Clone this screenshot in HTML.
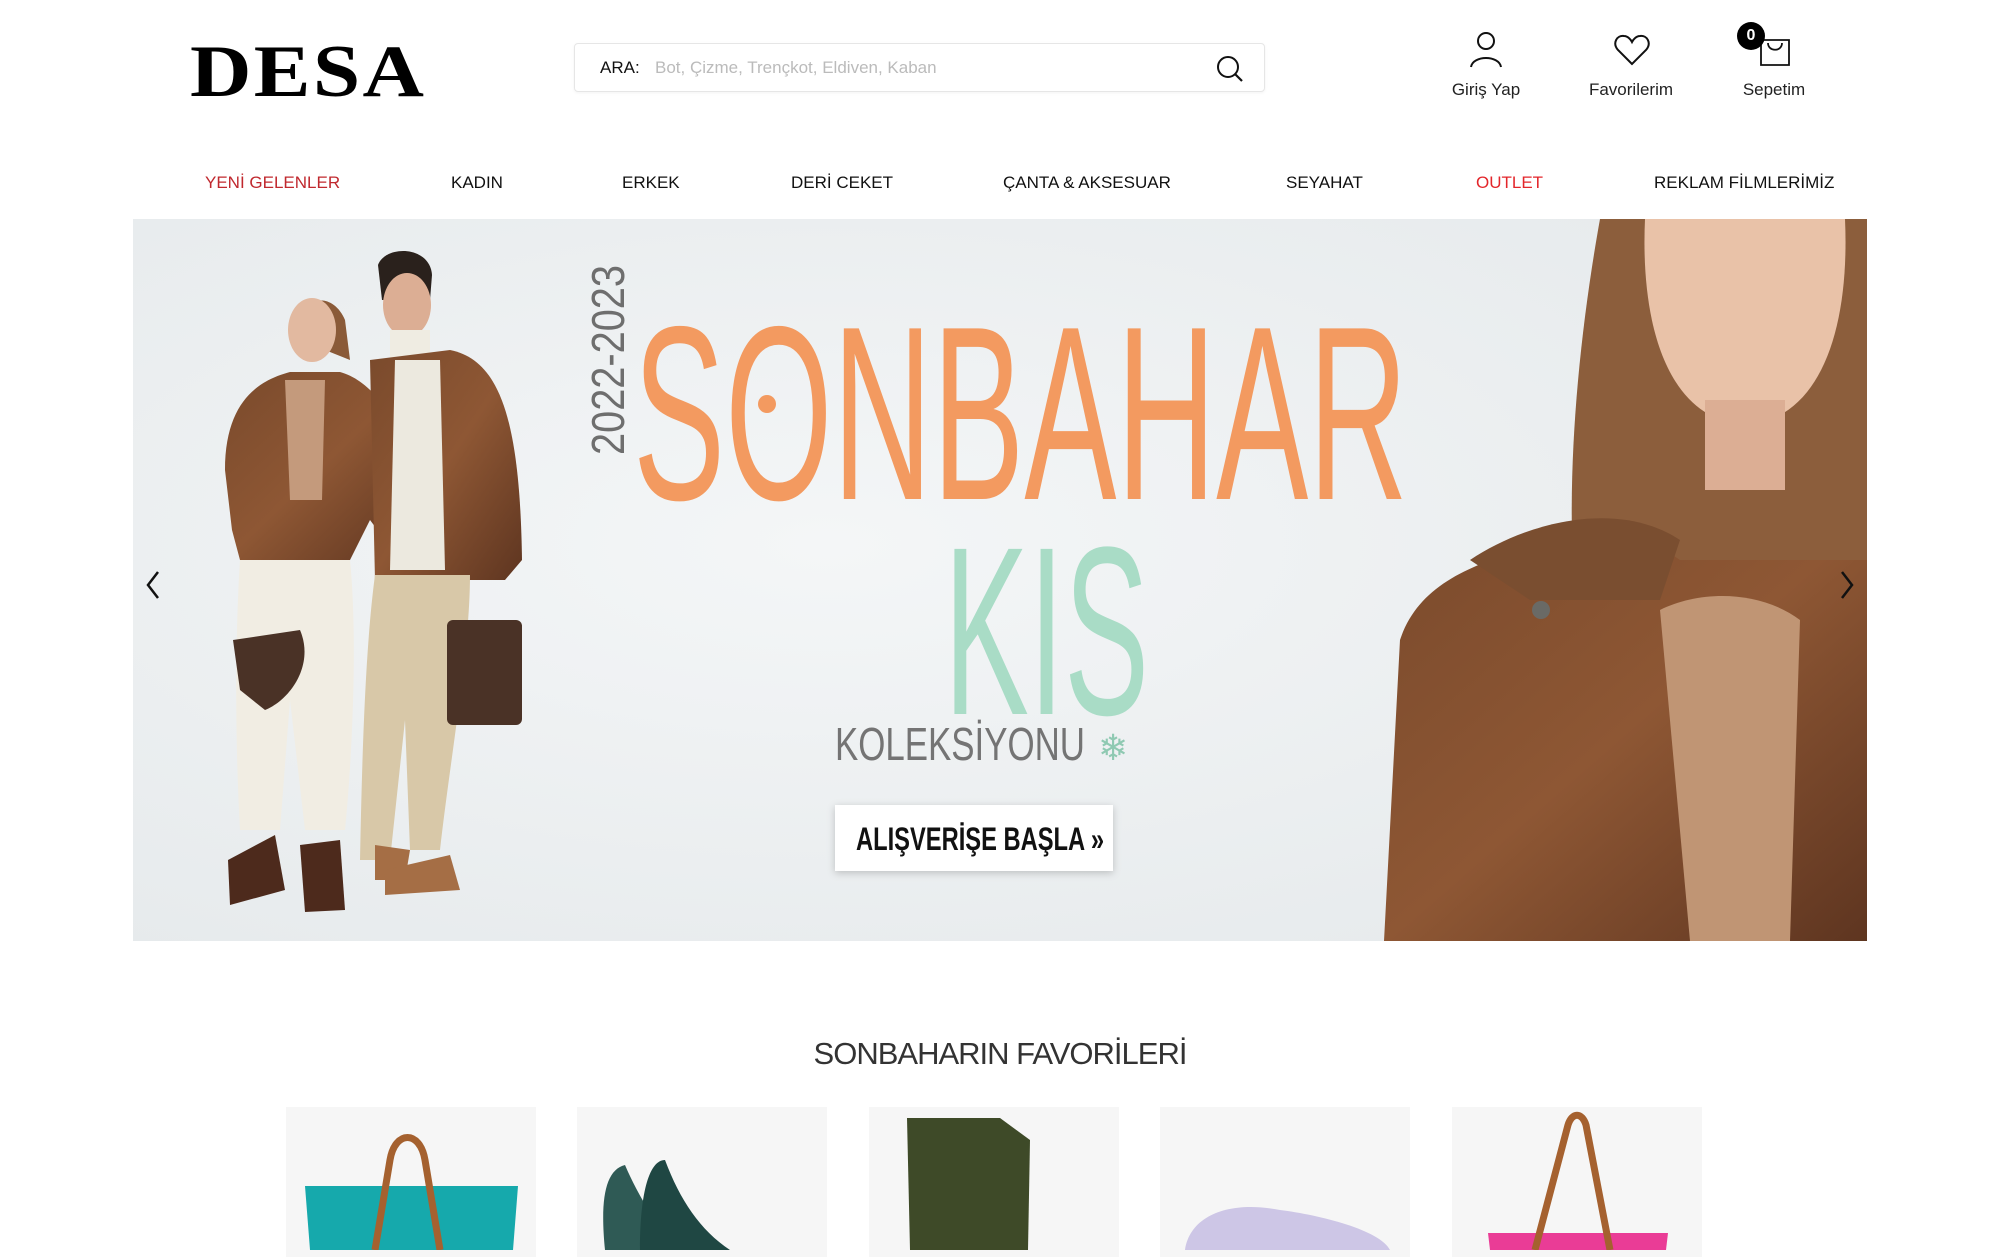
<!DOCTYPE html>
<html><head><meta charset="utf-8"><style>
*{margin:0;padding:0;box-sizing:border-box}
body{width:2000px;height:1250px;background:#fff;position:relative;overflow:hidden;font-family:"Liberation Sans",sans-serif;color:#111}
.abs{position:absolute}
.logo{left:190px;top:30px;font-family:"Liberation Serif",serif;font-weight:bold;font-size:74px;letter-spacing:2px;transform:scaleX(1.15);transform-origin:left;color:#000}
.search{left:574px;top:43px;width:691px;height:49px;border:1px solid #e6e6e6;border-radius:4px;box-shadow:0 1px 3px rgba(0,0,0,.05)}
.search .l{position:absolute;left:25px;top:14px;font-size:17px;color:#111}
.search .p{position:absolute;left:80px;top:14px;font-size:17px;color:#bbb}
.ic{text-align:center;font-size:17px;color:#222;width:120px}
.nav{top:173px;font-size:17px;color:#111;white-space:nowrap}
.red{color:#c0282e}
.tile{top:1107px;width:250px;height:150px;background:#f6f6f6}
</style></head><body>
<div class="abs logo">DESA</div>
<div class="abs search"><span class="l">ARA:</span><span class="p">Bot, Çizme, Trençkot, Eldiven, Kaban</span>
<svg class="abs" style="left:640px;top:10px" width="30" height="30" viewBox="0 0 30 30"><circle cx="13" cy="13" r="10" fill="none" stroke="#111" stroke-width="2"/><line x1="20.5" y1="20.5" x2="27" y2="27" stroke="#111" stroke-width="2.2"/></svg></div>

<svg class="abs" style="left:1468px;top:30px" width="36" height="40" viewBox="0 0 36 40"><circle cx="18" cy="11" r="8" fill="none" stroke="#111" stroke-width="2"/><path d="M3 37 C5 25,31 25,33 37" fill="none" stroke="#111" stroke-width="2"/></svg>
<div class="abs ic" style="left:1426px;top:80px">Giriş Yap</div>
<svg class="abs" style="left:1613px;top:33px" width="38" height="34" viewBox="0 0 38 34"><path d="M19 31 L5 17 C-1 10,4 2,11 3 C15 3,18 7,19 9 C20 7,23 3,27 3 C34 2,39 10,33 17 Z" fill="none" stroke="#111" stroke-width="2"/></svg>
<div class="abs ic" style="left:1571px;top:80px">Favorilerim</div>
<svg class="abs" style="left:1756px;top:30px" width="38" height="38" viewBox="0 0 38 38"><path d="M5 10 H33 V35 H5 Z" fill="none" stroke="#111" stroke-width="1.8"/><path d="M12 13 C12 22,26 22,26 13" fill="none" stroke="#111" stroke-width="1.8"/></svg>
<div class="abs" style="left:1737px;top:22px;width:28px;height:28px;border-radius:50%;background:#000;color:#fff;font-size:16px;font-weight:bold;text-align:center;line-height:28px">0</div>
<div class="abs ic" style="left:1714px;top:80px">Sepetim</div>

<div class="abs nav red" style="left:205px">YENİ GELENLER</div>
<div class="abs nav" style="left:451px">KADIN</div>
<div class="abs nav" style="left:622px">ERKEK</div>
<div class="abs nav" style="left:791px">DERİ CEKET</div>
<div class="abs nav" style="left:1003px">ÇANTA &amp; AKSESUAR</div>
<div class="abs nav" style="left:1286px">SEYAHAT</div>
<div class="abs nav" style="color:#e3262b;left:1476px">OUTLET</div>
<div class="abs nav" style="left:1654px">REKLAM FİLMLERİMİZ</div>

<svg class="abs" style="left:133px;top:219px" width="1734" height="722" viewBox="133 219 1734 722">
<defs><radialGradient id="bg" cx="0.4" cy="0.45" r="0.7"><stop offset="0" stop-color="#f4f6f7"/><stop offset="1" stop-color="#e6eaec"/></radialGradient>
<linearGradient id="jk" x1="0" y1="0" x2="1" y2="1"><stop offset="0" stop-color="#7a4a2c"/><stop offset=".5" stop-color="#8e5734"/><stop offset="1" stop-color="#5e3520"/></linearGradient></defs>
<rect x="133" y="219" width="1734" height="722" fill="url(#bg)"/>
<!-- couple -->
<path d="M300 340 C290 300,330 285,345 320 L350 360 Z" fill="#8a5a38"/>
<ellipse cx="312" cy="330" rx="24" ry="32" fill="#e2b9a0"/>
<path d="M378 265 C385 245,430 245,432 275 L430 300 L382 300 Z" fill="#2a211c"/>
<ellipse cx="407" cy="305" rx="24" ry="32" fill="#dcae94"/>
<rect x="390" y="330" width="40" height="40" fill="#efece2"/>
<path d="M225 470 C225 400,260 380,290 372 L340 372 C370 380,410 420,420 520 L400 560 L370 520 L350 560 L240 560 L232 530 Z" fill="url(#jk)"/>
<path d="M370 360 L450 350 C500 360,520 420,522 560 L505 580 L375 580 Z" fill="url(#jk)"/>
<path d="M395 360 L440 360 L445 570 L390 570 Z" fill="#ece9df"/>
<path d="M285 380 L325 380 L322 500 L290 500 Z" fill="#c49a7c"/>
<path d="M240 560 L350 560 C358 640,352 760,345 830 L305 830 L290 700 L280 830 L240 830 C235 740,235 640,240 560Z" fill="#f1ede3"/>
<path d="M375 575 L470 575 C470 650,450 760,440 850 L410 850 L405 720 L390 860 L360 860 C362 760,365 650,375 575Z" fill="#d8c8a8"/>
<path d="M228 860 L275 835 L285 890 L230 905 Z" fill="#4d2a1c"/>
<path d="M300 845 L340 840 L345 910 L305 912 Z" fill="#4d2a1c"/>
<path d="M375 845 L410 850 L405 880 L375 880 Z" fill="#a56e45"/>
<path d="M385 870 L450 855 L460 890 L385 895 Z" fill="#a56e45"/>
<path d="M233 640 L300 630 C315 665,290 700,265 710 L240 690 Z" fill="#4a3226"/>
<rect x="447" y="620" width="75" height="105" rx="6" fill="#4a3226"/>
<!-- text -->
<text transform="translate(624,455) rotate(-90)" font-family="Liberation Sans Narrow,Liberation Sans,sans-serif" font-size="46" fill="#6e6e6e" textLength="190" lengthAdjust="spacingAndGlyphs">2022-2023</text>
<text x="633" y="499" font-family="Liberation Sans Narrow,Liberation Sans,sans-serif" font-size="248" fill="#f39a60" textLength="775" lengthAdjust="spacingAndGlyphs">SONBAHAR</text>
<text x="944" y="714" font-family="Liberation Sans Narrow,Liberation Sans,sans-serif" font-size="240" fill="#a9dcc6" textLength="205" lengthAdjust="spacingAndGlyphs">KIS</text>
<text x="835" y="760" font-family="Liberation Sans Narrow,Liberation Sans,sans-serif" font-size="46" fill="#747474" textLength="250" lengthAdjust="spacingAndGlyphs">KOLEKSİYONU</text>
<text x="1098" y="760" font-size="36" fill="#8fc9b2">❄</text>
<circle cx="767" cy="404" r="9" fill="#f39a60"/>
<rect x="835" y="805" width="278" height="66" fill="#fff" style="filter:drop-shadow(0 2px 4px rgba(0,0,0,.2))"/>
<text x="856" y="850" font-family="Liberation Sans Narrow,Liberation Sans,sans-serif" font-size="32" font-weight="bold" fill="#111" textLength="248" lengthAdjust="spacingAndGlyphs">ALIŞVERİŞE BAŞLA »</text>
<!-- right woman -->
<path d="M1600 219 L1867 219 L1867 640 L1580 640 C1560 500,1580 330,1600 219Z" fill="#8c5e3c"/>
<path d="M1645 219 L1845 219 C1850 330,1820 420,1745 425 C1670 420,1640 330,1645 219Z" fill="#e9c2a8"/>
<rect x="1705" y="400" width="80" height="90" fill="#dcae94"/>
<path d="M1384 941 L1400 640 C1420 580,1480 560,1560 540 L1620 520 L1680 560 L1867 560 L1867 941Z" fill="url(#jk)"/>
<path d="M1470 560 C1530 520,1620 500,1680 540 L1660 600 L1530 600 Z" fill="#7a4e30"/>
<path d="M1660 610 C1700 590,1760 590,1800 620 L1790 941 L1690 941 Z" fill="#c09574"/>
<circle cx="1541" cy="610" r="9" fill="#6a6a66"/>
<path d="M158 572 L148 585 L158 598" fill="none" stroke="#111" stroke-width="2.5"/>
<path d="M1842 572 L1852 585 L1842 598" fill="none" stroke="#111" stroke-width="2.5"/>
</svg>

<div class="abs" style="left:0;width:2000px;top:1036px;text-align:center;font-size:31px;color:#333;letter-spacing:-1px">SONBAHARIN FAVORİLERİ</div>

<div class="abs tile" style="left:286px"></div>
<div class="abs tile" style="left:577px"></div>
<div class="abs tile" style="left:869px"></div>
<div class="abs tile" style="left:1160px"></div>
<div class="abs tile" style="left:1452px"></div>
<svg class="abs" style="left:0;top:1107px" width="2000" height="143" viewBox="0 1107 2000 143">
<path d="M305 1186 L518 1186 L513 1250 L310 1250Z" fill="#16a9ac"/>
<path d="M375 1250 L390 1160 C395 1130,420 1130,425 1160 L440 1250" fill="none" stroke="#a5612f" stroke-width="7"/>
<path d="M605 1250 C600 1200,605 1170,625 1165 C640 1200,660 1230,680 1250Z" fill="#2f5a55"/>
<path d="M640 1250 C640 1190,650 1160,665 1160 C680 1200,700 1230,730 1250Z" fill="#1f4743"/>
<path d="M907 1118 L1000 1118 L1030 1140 L1028 1250 L910 1250Z" fill="#3e4a28"/>
<path d="M1185 1250 C1190 1215,1230 1200,1280 1210 C1320 1215,1380 1230,1390 1250Z" fill="#cdc6e6"/>
<path d="M1488 1233 L1668 1233 L1666 1250 L1490 1250Z" fill="#ea3c96"/>
<path d="M1535 1250 L1568 1125 C1572 1112,1582 1112,1586 1125 L1610 1250" fill="none" stroke="#a5612f" stroke-width="7"/>
</svg>
</body></html>
